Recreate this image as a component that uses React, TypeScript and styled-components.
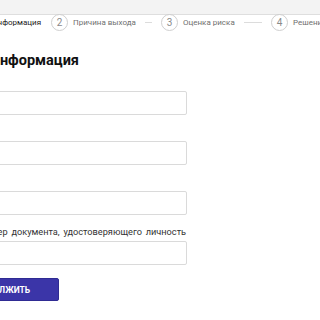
import React from 'react';
import styled, { createGlobalStyle } from 'styled-components';

const GlobalStyle = createGlobalStyle`
  html, body {
    margin: 0;
    padding: 0;
    background: #fff;
    overflow: hidden;
  }
  body {
    font-family: Roboto, 'Open Sans', sans-serif;
    color: #222;
  }
`;

// the page is scrolled sideways, so its content starts left of the window
const Page = styled.div`
  width: 420px;
  margin-left: -59px;
`;

const TopBar = styled.div`
  height: 14px;
  margin-left: -20px;
  background: #f3f3f3;
  border-bottom: 1px solid #dedede;
`;

const Steps = styled.ol`
  display: flex;
  list-style: none;
  margin: -1px 0 0;
  padding: 0;
  height: 17px;
`;

const Step = styled.li`
  flex: none;
  width: 110px;
  display: flex;
  align-items: center;
`;

const StepCircle = styled.span`
  flex: none;
  box-sizing: border-box;
  width: 17px;
  height: 17px;
  border: 1px solid #cfcfcf;
  border-radius: 50%;
  display: flex;
  align-items: center;
  justify-content: center;
  font-size: 10px;
  color: #8a8a8a;
`;

const StepLabel = styled.span<{ $active?: boolean }>`
  flex: none;
  margin-left: 5px;
  font-size: 8px;
  white-space: nowrap;
  color: ${(p) => (p.$active ? '#222' : '#6f6f6f')};
`;

const StepLine = styled.span`
  flex: 1;
  min-width: 0;
  height: 1px;
  margin: 0 9px 0 9px;
  background: #dcdcdc;
`;

const Title = styled.h1`
  margin: 20px 0 3px;
  font-size: 14.5px;
  line-height: 20px;
  font-weight: 700;
  color: #111;
`;

const Form = styled.form`
  display: flex;
  flex-direction: column;
  gap: 9px;
  width: 246px;
`;

const Field = styled.label`
  display: flex;
  flex-direction: column;
`;

const FieldLabel = styled.span`
  font-size: 9.2px;
  line-height: 15px;
  margin-bottom: 2px;
  white-space: nowrap;
  word-spacing: 1.5px;
  color: #333;
`;

const Input = styled.input`
  box-sizing: border-box;
  height: 24px;
  width: 100%;
  border: 1px solid #dadada;
  border-radius: 2px;
  background: #fff;
  outline: none;
`;

const Submit = styled.button`
  align-self: flex-start;
  margin-top: 4px;
  width: 118px;
  height: 23px;
  border: 1px solid #2f2b93;
  border-radius: 2px;
  background: #3b35a8;
  color: #fff;
  font-family: inherit;
  font-size: 8.5px;
  font-weight: 700;
  text-transform: uppercase;
`;

const steps = ['Личная информация', 'Причина выхода', 'Оценка риска', 'Решение'];

const fields = [
  'Фамилия',
  'Имя',
  'Отчество',
  'Серия и номер документа, удостоверяющего личность',
];

const App: React.FC = () => {
  return (
    <Page>
      <GlobalStyle />
      <TopBar />
      <Steps>
        {steps.map((s, i) => (
          <Step key={s}>
            <StepCircle>{i + 1}</StepCircle>
            <StepLabel $active={i === 0}>{s}</StepLabel>
            {i > 0 && i < steps.length - 1 && <StepLine />}
          </Step>
        ))}
      </Steps>
      <Title>Общая информация</Title>
      <Form onSubmit={(e) => e.preventDefault()}>
        {fields.map((f) => (
          <Field key={f}>
            <FieldLabel>{f}</FieldLabel>
            <Input type="text" />
          </Field>
        ))}
        <Submit type="submit">Продолжить</Submit>
      </Form>
    </Page>
  );
};

export default App;
